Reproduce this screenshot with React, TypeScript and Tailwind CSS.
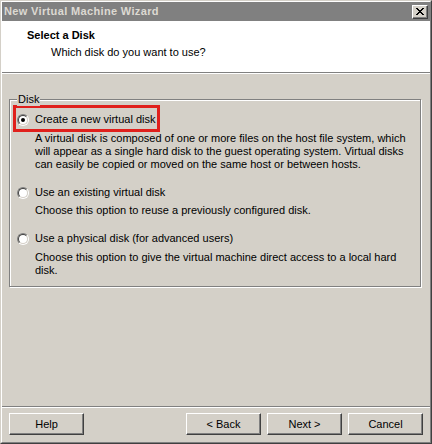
import React from "react";

const ui = "font-['Liberation_Sans',Arial,sans-serif] text-[11px] leading-[13px] text-black";

function Radio({ checked }: { checked?: boolean }) {
  return (
    <span className="w-3 h-3 shrink-0 rounded-full border border-t-[#808080] border-l-[#808080] border-r-white border-b-white flex">
      <span className="flex-1 rounded-full border border-t-[#404040] border-l-[#404040] border-r-[#d4d0c8] border-b-[#d4d0c8] bg-white flex items-center justify-center">
        {checked && <span className="w-1 h-1 rounded-full bg-black" />}
      </span>
    </span>
  );
}

function Btn({ children }: { children: React.ReactNode }) {
  return (
    <button className="w-[75px] h-[22px] bg-[#d4d0c8] border border-t-white border-l-white border-r-[#404040] border-b-[#404040] shadow-[inset_-1px_-1px_0_#808080] flex items-center justify-center">
      {children}
    </button>
  );
}

export default function App() {
  return (
    <div className={`${ui} w-[432px] h-[444px] bg-[#d4d0c8] border border-t-[#d4d0c8] border-l-[#d4d0c8] border-r-[#404040] border-b-[#404040] flex flex-col`}>
      <div className="flex-1 border border-t-white border-l-white border-r-[#808080] border-b-[#808080] flex flex-col">
        {/* Title bar */}
        <div className="h-[19px] bg-[#808080] flex items-center justify-between pl-[2px] pr-[2px]">
          <span className="font-bold text-[#dcd9d2] tracking-[0.35px]">New Virtual Machine Wizard</span>
          <span className="w-4 h-[14px] bg-[#d4d0c8] border border-t-white border-l-white border-r-[#404040] border-b-[#404040] shadow-[inset_-1px_-1px_0_#808080] flex items-center justify-center">
            <svg width="8" height="7" viewBox="0 0 8 7" shapeRendering="crispEdges">
              <path d="M0 0h2v1H0zM6 0h2v1H6zM1 1h2v1H1zM5 1h2v1H5zM2 2h4v1H2zM3 3h2v1H3zM2 4h4v1H2zM1 5h2v1H1zM5 5h2v1H5zM0 6h2v1H0zM6 6h2v1H6z" fill="#000" />
            </svg>
          </span>
        </div>

        {/* Header */}
        <div className="h-[52px] bg-white pl-[25px] pt-[8px] border-b border-[#808080]">
          <div className="font-bold">Select a Disk</div>
          <div className="mt-[4px] ml-[24px]">Which disk do you want to use?</div>
        </div>
        <div className="h-px bg-white" />

        {/* Body */}
        <div className="flex-1 flex flex-col">
          <div className="relative mt-[25px] ml-[7px] mr-[9px] border border-[#808080] shadow-[inset_1px_1px_0_#fff,1px_1px_0_#fff] pl-[3px] pt-[5px] pb-[9px]">
            <span className="absolute left-[7px] -top-[7px] bg-[#d4d0c8] px-px">Disk</span>

            <div className="inline-flex items-center gap-[6px] border-[3px] border-[#e0201c] pl-px pr-[2px] pt-[5px] pb-[3px]">
              <Radio checked />
              <span>Create a new virtual disk</span>
            </div>
            <p className="ml-[22px]">
              A virtual disk is composed of one or more files on the host file system, which will appear as a single hard disk to the guest operating system. Virtual disks can easily be copied or moved on the same host or between hosts.
            </p>

            <div className="mt-[15px] pl-[4px] flex items-center gap-[6px]">
              <Radio />
              <span>Use an existing virtual disk</span>
            </div>
            <p className="ml-[22px] mt-[5px]">Choose this option to reuse a previously configured disk.</p>

            <div className="mt-[15px] pl-[4px] flex items-center gap-[6px]">
              <Radio />
              <span>Use a physical disk (for advanced users)</span>
            </div>
            <p className="ml-[22px] mt-[6px] pr-[8px]">
              Choose this option to give the virtual machine direct access to a local hard disk.
            </p>
          </div>

          <div className="mt-auto h-[2px] border-t border-[#808080] border-b border-b-white" />
          <div className="flex items-center pt-[5px] pb-[7px] px-[7px]">
            <Btn>Help</Btn>
            <div className="flex-1" />
            <div className="flex gap-[6px]">
              <Btn>&lt; Back</Btn>
              <Btn>Next &gt;</Btn>
              <Btn>Cancel</Btn>
            </div>
          </div>
        </div>
      </div>
    </div>
  );
}
